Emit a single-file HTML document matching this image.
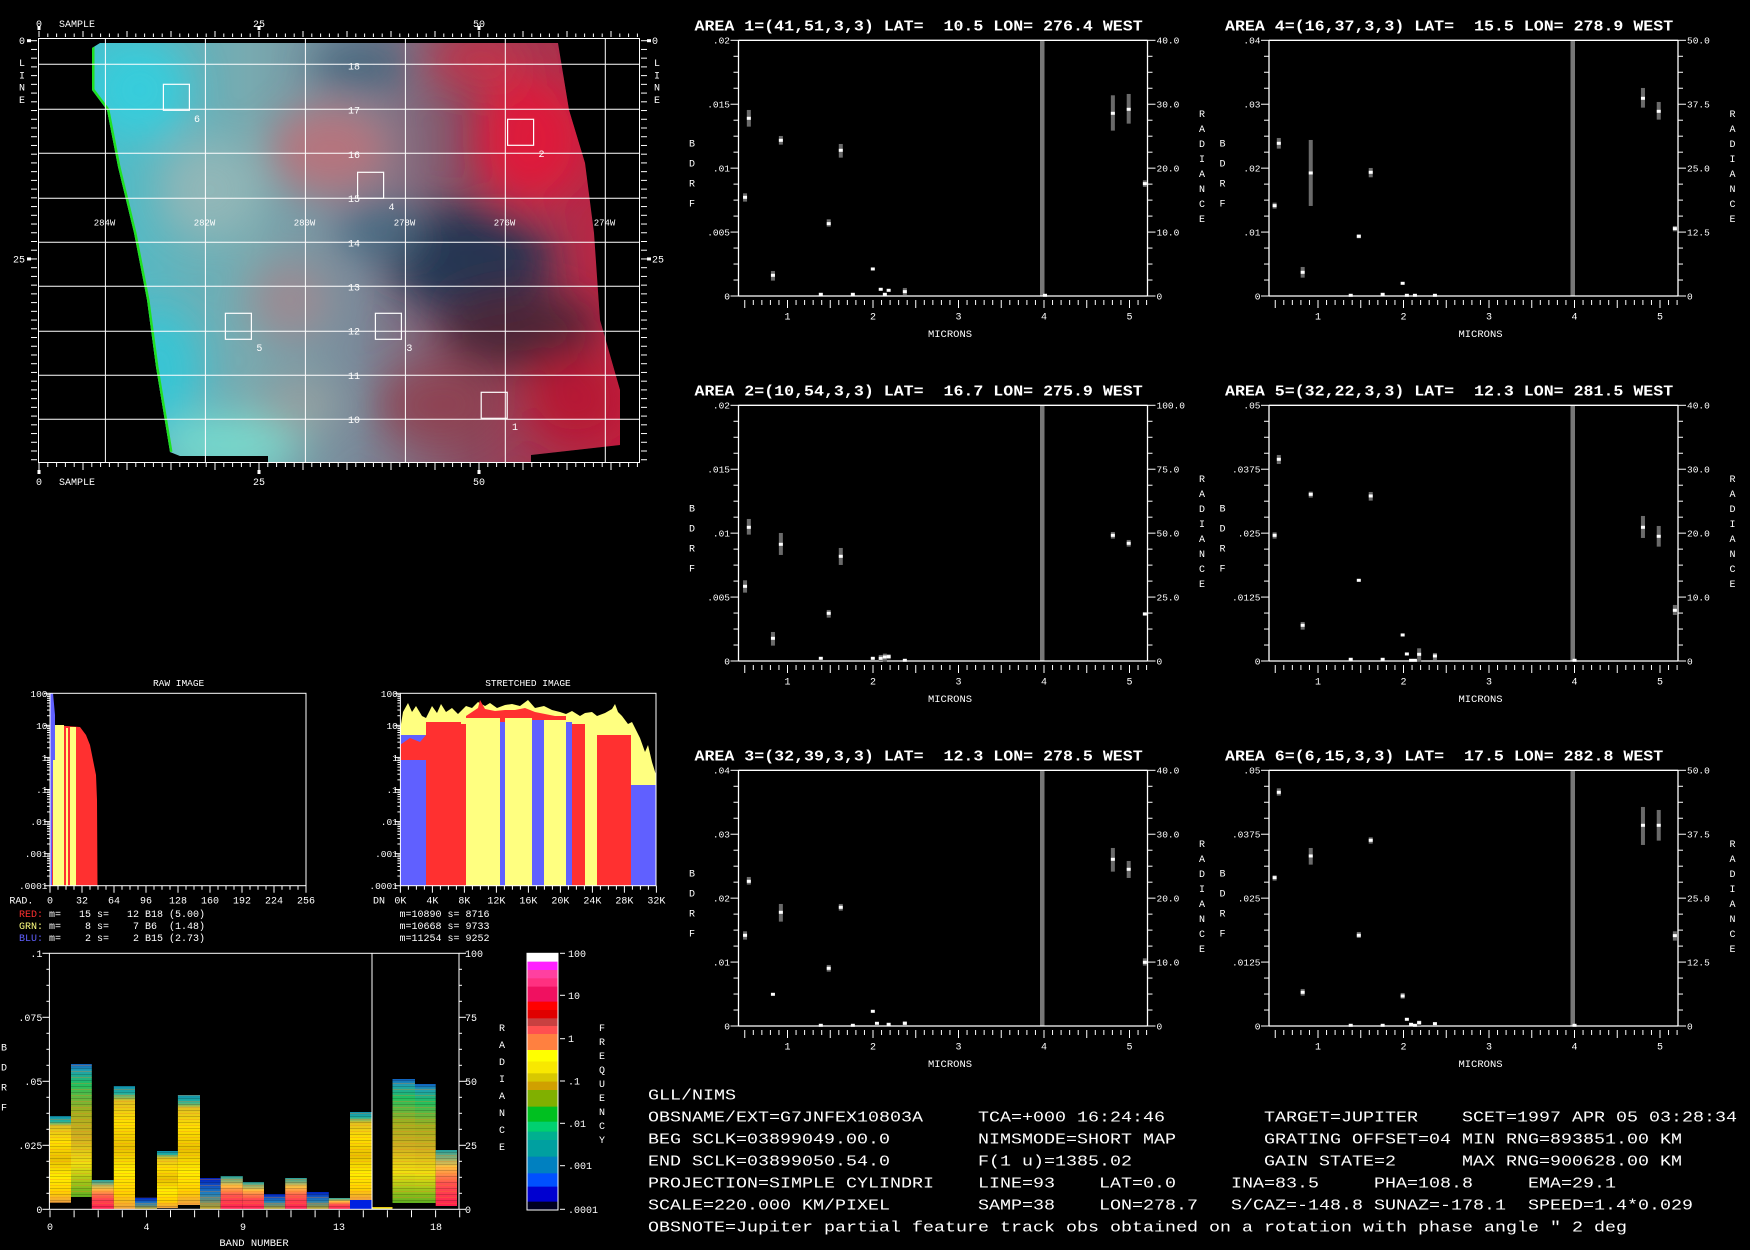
<!DOCTYPE html>
<html><head><meta charset="utf-8">
<style>
html,body{margin:0;padding:0;background:#000;width:1750px;height:1250px;overflow:hidden}
svg{position:absolute;left:0;top:0;font-family:"Liberation Mono",monospace}
text{white-space:pre}
</style></head>
<body>
<svg id="s" width="1750" height="1250" xmlns="http://www.w3.org/2000/svg">
<defs>
<clipPath id="mapclip"><polygon points="92,48 100,43 558,43 569,110 585,163 594,233 600,320 620,390 620,445 531,455 531,462 268,462 268,456 180,456 170,452 156,367 147,300 134,233 118,167 107,110 92,90"/></clipPath>
<filter id="blur" x="-20%" y="-20%" width="140%" height="140%"><feGaussianBlur stdDeviation="20"/></filter>
<linearGradient id="mapg" x1="90" y1="0" x2="620" y2="0" gradientUnits="userSpaceOnUse">
<stop offset="0" stop-color="#48c0cc"/><stop offset="0.3" stop-color="#78aab0"/><stop offset="0.5" stop-color="#7a8a9a"/><stop offset="0.72" stop-color="#8a4a60"/><stop offset="1" stop-color="#c02040"/></linearGradient>
<linearGradient id="gA" x1="0" y1="0" x2="0" y2="1"><stop offset="0" stop-color="#1090b0"/><stop offset="0.06" stop-color="#20b0a0"/><stop offset="0.12" stop-color="#e0c020"/><stop offset="0.3" stop-color="#ffe000"/><stop offset="0.5" stop-color="#e8c000"/><stop offset="0.7" stop-color="#ffee00"/><stop offset="0.88" stop-color="#ffd000"/><stop offset="1" stop-color="#f0a040"/></linearGradient>
<linearGradient id="gB" x1="0" y1="0" x2="0" y2="1"><stop offset="0" stop-color="#1060c0"/><stop offset="0.05" stop-color="#20a0b0"/><stop offset="0.15" stop-color="#20c060"/><stop offset="0.35" stop-color="#a0b020"/><stop offset="0.55" stop-color="#d0b020"/><stop offset="0.75" stop-color="#f0e010"/><stop offset="1" stop-color="#60b020"/></linearGradient>
<linearGradient id="gC" x1="0" y1="0" x2="0" y2="1"><stop offset="0" stop-color="#20a0a0"/><stop offset="0.3" stop-color="#ffc040"/><stop offset="0.6" stop-color="#ff5050"/><stop offset="1" stop-color="#ff2050"/></linearGradient>
<linearGradient id="gD" x1="0" y1="0" x2="0" y2="1"><stop offset="0" stop-color="#0020c0"/><stop offset="0.5" stop-color="#2080c0"/><stop offset="1" stop-color="#c0a020"/></linearGradient>
<pattern id="strp" width="6" height="6" patternUnits="userSpaceOnUse"><rect y="0" width="6" height="1" fill="#000" opacity="0.18"/><rect y="3" width="6" height="1" fill="#f08020" opacity="0.3"/></pattern>
</defs>

<g clip-path="url(#mapclip)">
<rect x="80" y="40" width="560" height="430" fill="url(#mapg)"/>
<g filter="url(#blur)" opacity="0.85">
<ellipse cx="140" cy="90" rx="50" ry="50" fill="#30d0e0"/>
<ellipse cx="160" cy="370" rx="40" ry="60" fill="#30c8d8"/>
<ellipse cx="230" cy="445" rx="70" ry="30" fill="#78e0d0"/>
<ellipse cx="210" cy="190" rx="50" ry="50" fill="#98b8b8"/>
<ellipse cx="330" cy="150" rx="60" ry="45" fill="#c07078"/>
<ellipse cx="290" cy="300" rx="40" ry="40" fill="#a08890"/>
<ellipse cx="360" cy="65" rx="50" ry="25" fill="#406078"/>
<ellipse cx="480" cy="60" rx="50" ry="30" fill="#c83048"/>
<ellipse cx="530" cy="140" rx="55" ry="65" fill="#e81838"/>
<ellipse cx="470" cy="260" rx="80" ry="55" fill="#183050"/>
<ellipse cx="380" cy="230" rx="40" ry="30" fill="#406880"/>
<ellipse cx="520" cy="330" rx="80" ry="40" fill="#402030"/>
<ellipse cx="575" cy="400" rx="50" ry="45" fill="#b81830"/>
<ellipse cx="440" cy="405" rx="60" ry="40" fill="#904050"/>
<ellipse cx="300" cy="405" rx="40" ry="30" fill="#98a0a0"/>
</g>
<polyline points="92,44 92,90 107,110 118,167 134,233 147,300 156,367 170,452" fill="none" stroke="#20e020" stroke-width="5"/>
</g>
<g id="mapgrid" stroke="#fff" stroke-width="1" fill="none"></g>
<g id="mapfg"></g>
</svg>
<script>
const NS='http://www.w3.org/2000/svg';
const S=document.getElementById('s');
function el(t,a,p){const e=document.createElementNS(NS,t);for(const k in a)e.setAttribute(k,a[k]);(p||S).appendChild(e);return e;}
function tx(x,y,s,size,anchor,extra,p){const e=el('text',Object.assign({x:x,y:y,'font-size':size,'text-anchor':anchor||'start',fill:'#fff',style:'white-space:pre'},extra||{}),p);e.textContent=s;return e;}
function ln(x1,y1,x2,y2,c,w){return el('line',{x1:x1,y1:y1,x2:x2,y2:y2,stroke:c||'#fff','stroke-width':w||1});}
function rc(x,y,w,h,f){return el('rect',{x:x,y:y,width:w,height:h,fill:f});}

const G=document.getElementById('mapgrid');
el('rect',{x:38.5,y:38.5,width:601,height:424},G);
[105.4,205.4,305.4,405.4,505.3,605.3].forEach(x=>el('line',{x1:x,y1:38.5,x2:x,y2:462.5},G));
[64.3,109.3,153.3,198.3,242.3,286.3,331.3,375.3,419.3].forEach(y=>el('line',{x1:38.5,y1:y,x2:639.5,y2:y},G));
for(let s=0;s<=68;s++){const x=39+s*8.8;if(x>640)break;const mj=s%5==0;
 ln(x,mj?31:33.5,x,37);ln(x,463,x,mj?470:467);}
[0,25,50].forEach(s=>{const x=39+s*8.8;rc(x-1.5,26,3,4,'#fff');rc(x-1.5,470,3,4,'#fff');
 tx(x,27,String(s),10,'middle');tx(x,485,String(s),10,'middle');});
tx(59,27,'SAMPLE',10);tx(59,485,'SAMPLE',10);
for(let l=0;l<=48;l++){const y=40.7+l*8.73;if(y>462)break;ln(31,y,37,y);ln(641,y,647,y);}
[0,25].forEach(l=>{const y=40.7+l*8.73;rc(27,y-1.5,4,3,'#fff');rc(647,y-1.5,4,3,'#fff');
 tx(25,y+3.5,String(l),10,'end');tx(652,y+3.5,String(l),10);});
['L','I','N','E'].forEach((c,i)=>{tx(22,66+i*12.3,c,10,'middle');tx(657,66+i*12.3,c,10,'middle');});
const F=document.getElementById('mapfg');
['18','17','16','15','14','13','12','11','10'].forEach((t,i)=>tx(354,69.5+i*44.2,t,10,'middle',{},F));
['284W','282W','280W','278W','276W','274W'].forEach((t,i)=>tx(104.5+i*100,225.5,t,9,'middle',{},F));
[[163.4,84.3,'6',197,122],[507.6,119.3,'2',541.5,157],[357.6,172.3,'4',391.5,210],[225.4,313.3,'5',259.4,351],[375.4,313.3,'3',409.4,351],[481.2,392.3,'1',515,430]].forEach(b=>{
 el('rect',{x:b[0],y:b[1],width:26,height:26,fill:'none',stroke:'#fff','stroke-width':1.2});tx(b[3],b[4],b[2],10,'middle');});

const cols=[{L:738.5,zx0:170,k:0.3444},{L:1269,zx0:197,k:0.3508}];
const rowsT=[40.3,405.3,770.3];
const W=409,H=255.7;
const plots=[
{c:0,r:0,t:'AREA 1=(41,51,3,3) LAT=  10.5 LON= 276.4 WEST',lf:['.02','.015','.01','.005','0'],rt:['40.0','30.0','20.0','10.0','0'],
 p:[[189,592,580,605],[200,355,330,380],[270,826,813,842],[293,421,408,434],[409,883],[432,671,658,680],[467,451,432,473],[502,883],[560,807],[583,868],[595,883],[606,871],[653,875,864,885],[1060,886],[1257,340,286,392],[1303,328,282,371],[1350,551,541,561]]},
{c:1,r:0,t:'AREA 4=(16,37,3,3) LAT=  15.5 LON= 278.9 WEST',lf:['.04','.03','.02','.01','0'],rt:['50.0','37.5','25.0','12.5','0'],
 p:[[213,617,608,626],[225,430,414,446],[293,817,801,833],[316,519,420,618],[430,886],[453,709,703,715],[487,517,504,532],[521,883],[578,850],[590,886],[613,886],[670,886],[1263,295,264,323],[1308,334,306,359],[1354,686,678,694]]},
{c:0,r:1,t:'AREA 2=(10,54,3,3) LAT=  16.7 LON= 275.9 WEST',lf:['.02','.015','.01','.005','0'],rt:['100.0','75.0','50.0','25.0','0'],
 p:[[189,664,646,683],[200,487,462,509],[270,820,801,842],[293,538,504,570],[409,880],[432,745,735,758],[467,574,549,600],[560,880],[583,880,870,888],[595,876,866,890],[606,875,868,883],[653,886],[1257,511,501,521],[1303,535,525,545],[1350,747,742,752]]},
{c:1,r:1,t:'AREA 5=(32,22,3,3) LAT=  12.3 LON= 281.5 WEST',lf:['.05','.0375','.025','.0125','0'],rt:['40.0','30.0','20.0','10.0','0'],
 p:[[213,511,502,521],[225,283,270,297],[293,781,771,794],[316,388,380,398],[430,883],[453,646],[487,393,381,407],[521,883],[578,810],[590,867],[602,886],[613,886],[625,868,850,890],[670,873,864,887],[1068,886],[1263,487,453,519],[1308,514,483,545],[1354,736,720,750]]},
{c:0,r:2,t:'AREA 3=(32,39,3,3) LAT=  12.3 LON= 278.5 WEST',lf:['.04','.03','.02','.01','0'],rt:['40.0','30.0','20.0','10.0','0'],
 p:[[189,616,604,629],[200,454,441,464],[270,793],[293,547,522,575],[409,886],[432,715,705,725],[467,532,522,542],[502,886],[560,844],[572,880],[606,883],[653,880,874,886],[1257,388,354,425],[1303,418,393,444],[1350,697,685,707]]},
{c:1,r:2,t:'AREA 6=(6,15,3,3) LAT=  17.5 LON= 282.8 WEST',lf:['.05','.0375','.025','.0125','0'],rt:['50.0','37.5','25.0','12.5','0'],
 p:[[213,443,436,452],[225,187,175,197],[293,787,777,797],[316,378,354,404],[430,886],[453,616,606,624],[487,331,322,341],[521,886],[578,798,789,806],[590,868],[602,883],[613,886],[625,878,872,888],[670,881],[1068,886],[1263,286,231,345],[1308,286,240,332],[1354,617,604,632]]}
];
plots.forEach(P=>{
 const C=cols[P.c],L=C.L,T=rowsT[P.r],R=L+W,B=T+H;
 const t=tx(L-44,T-10,P.t,15,'start',{'font-weight':'bold'});
 t.setAttribute('textLength',P.t.length*9.96);t.setAttribute('lengthAdjust','spacingAndGlyphs');
 rc(L+301.5,T,4.5,H,'#777');
 ln(L,T,R,T,'#fff',1.3);ln(L,T,L,B,'#fff',1.3);ln(R,T,R,B,'#fff',1.3);ln(L,B,R,B,'#fff',1.3);
 for(let i=0;i<=16;i++){const y=T+i*H/16,mj=i%4==0;ln(L-(mj?8:5),y,L,y);ln(R,y,R+(mj?8:5),y);}
 for(let i=0;i<5;i++){const y=T+i*H/4+3.3;tx(L-8.5,y,P.lf[i],9.5,'end');tx(R+9,y,P.rt[i],9.5,'start');}
 for(let m=5;m<=52;m++){const x=L-36.5+85.5*m/10;if(x<L-1||x>R+1)continue;const mj=m%5==0;ln(x,B+4,x,B+(mj?12:9));}
 [1,2,3,4,5].forEach(m=>tx(L-36.5+85.5*m,T+279,String(m),10,'middle'));
 tx(L+211.5,T+296.5,'MICRONS',10.5,'middle');
 ['B','D','R','F'].forEach((c,i)=>tx(L-46.5,T+106+i*20,c,10,'middle'));
 ['R','A','D','I','A','N','C','E'].forEach((c,i)=>tx(R+54.5,T+76.5+i*15,c,10,'middle'));
 P.p.forEach(q=>{const x=L+(q[0]-C.zx0)*C.k,y=T+(q[1]-121)/3;
  if(q.length>2){rc(x-2,T+(q[2]-121)/3,4,(q[3]-q[2])/3,'#6a6a6a');}
  rc(x-2,y-1.5,4,3,'#fff');});
});

function histFrame(x0,x1,title,tcx,xl,xlab){
 const T=693.3,B=885.7;
 tx(tcx,686,title,9.5,'middle');
 el('rect',{x:x0,y:T,width:x1-x0,height:B-T,fill:'none',stroke:'#fff','stroke-width':1});
 const labs=['100','10','1','.1','.01','.001','.0001'];
 for(let d=0;d<=6;d++){const y=T+d*32.07;ln(x0-6,y,x0,y);tx(x0-2.5,y+3.5,labs[d],9.5,'end');
  if(d<6)[2,3,4,5,6,7,8,9].forEach(v=>{const yy=T+(d+1)*32.07-Math.log10(v)*32.07;ln(x0-3,yy,x0,yy);});}
 for(let i=0;i<=32;i++){const x=x0+i*8;ln(x,B,x,B+(i%4==0?7:4));}
 xl.forEach((s,i)=>tx(x0+i*32,903.5,s,10,'middle'));
 tx(xlab[1],903.5,xlab[0],10,'start');
}
el('polygon',{points:'50,886 50,747 53,747 53,725 80,727 86,735 90,745 92,755 94,765 96,775 97,800 97.5,886',fill:'#ff3030'});
rc(53,725,11,161,'#ffff80');rc(66,728,2,158,'#ffff80');rc(70,727,6,159,'#ffff80');
el('polygon',{points:'50,693 53,693 55,715 55,760 53,760 52,886 50,886',fill:'#6060ff'});
histFrame(50,306,'RAW IMAGE',178.6,['0','32','64','96','128','160','192','224','256'],['RAD.',9.4]);
// stretched: jagged top background first
el('polygon',{points:'400,730 403,712 408,703 412,712 416,706 422,716 426,718 432,706 437,713 441,704 446,712 452,708 458,714 466,706 472,708 478,702 485,706 490,703 497,708 505,705 512,704 520,706 528,700 535,708 544,706 552,710 560,712 566,714 572,711 580,716 585,713 592,712 597,716 605,713 612,709 615,704 618,712 622,716 628,724 632,722 636,730 640,738 645,752 648,745 652,762 656,775 656,800 400,800',fill:'#ffff80'});
el('polygon',{points:'466,716 472,712 478,708 480,700 485,709 495,711 505,710 515,710 525,708 535,712 545,714 555,716 566,716 566,722 466,722',fill:'#ff3030'});
const st=[[400,426,'#6060ff',735],[426,461,'#ff3030',722],[461,466,'#ff3030',724],[466,500,'#ffff80',718],[500,505,'#6060ff',722],[505,532,'#ffff80',718],[532,544,'#6060ff',720],[544,566,'#ffff80',720],[566,572,'#6060ff',722],[572,585,'#ff3030',724],[585,597,'#ffff80',724],[597,631,'#ff3030',735],[631,656,'#6060ff',785]];
st.forEach(s=>rc(s[0],s[3],s[1]-s[0],886-s[3],s[2]));
el('polygon',{points:'400,745 410,738 420,742 426,735 426,760 400,760',fill:'#ff3030'});
histFrame(400.4,656,'STRETCHED IMAGE',528,['0K','4K','8K','12K','16K','20K','24K','28K','32K'],['DN',373]);
function leg(y,lab,col,rest){const t=tx(19,y,'',10);
 const a=document.createElementNS(NS,'tspan');a.setAttribute('fill',col);a.textContent=lab;t.appendChild(a);
 const b=document.createElementNS(NS,'tspan');b.textContent=rest;t.appendChild(b);}
leg(917,'RED:','#ff3030',' m=   15 s=   12 B18 (5.00)');
leg(929,'GRN:','#ffff80',' m=    8 s=    7 B6  (1.48)');
leg(941,'BLU:','#6060ff',' m=    2 s=    2 B15 (2.73)');
tx(399.5,917,'m=10890 s= 8716',10);tx(399.5,929,'m=10668 s= 9733',10);tx(399.5,941,'m=11254 s= 9252',10);

const bT=953.3,bB=1209.3,bL=49.4,bR=459;
const edges=[49.4,71,91.8,113.8,135,157,177.9,200,220.7,242.8,264,285.2,306.8,328.8,350,372,392.5,415,435.7,457];
const bars=[[1116,1202.7,'gA'],[1064,1197,'gB'],[1180,1209,'gC'],[1086,1209,'gA'],[1197.7,1209,'gD'],[1151,1208,'gA'],[1095,1205,'gA'],[1178,1209,'gD'],[1176,1209,'gC'],[1182,1209,'gC'],[1194,1209,'gD'],[1178,1209,'gC'],[1192,1209,'gD'],[1198,1209,'gC'],[1112,1200,'gA'],[1207,1209,'gA'],[1079,1203,'gB'],[1084,1203,'gB'],[1150,1206,'gC']];
bars.forEach((b,i)=>{const x=edges[i],w=edges[i+1]-x;rc(x,b[0],w,b[1]-b[0],'url(#'+b[2]+')');rc(x,b[0],w,b[1]-b[0],'url(#strp)');});
rc(350,1200,22,9,'#0020e0');
rc(372,1208,20,1.5,'#e0e040');
el('rect',{x:bL,y:bT,width:bR-bL,height:bB-bT,fill:'none',stroke:'#fff','stroke-width':1});
ln(372,bT,372,bB);
const bl=['.1','.075','.05','.025','0'],br=['100','75','50','25','0'];
for(let i=0;i<=16;i++){const y=bT+i*16,mj=i%4==0;ln(bL-(mj?7:3),y,bL,y);ln(bR,y,bR+(mj?7:3),y);
 if(mj){tx(bL-7,y+3.5,bl[i/4],10,'end');tx(bR+6,y+3.5,br[i/4],10,'start');}}
for(let i=0;i<=17;i++){const x=50+24.1*i;ln(x,bB+1,x,bB+8);}
[[0,50],[4,146.5],[9,243],[13,339],[18,436]].forEach(a=>tx(a[1],1230,String(a[0]),10,'middle'));
tx(254,1246,'BAND NUMBER',10.5,'middle');
['B','D','R','F'].forEach((c,i)=>tx(4,1050.5+i*20,c,10,'middle'));
['R','A','D','I','A','N','C','E'].forEach((c,i)=>tx(502,1031+i*17,c,10,'middle'));
['F','R','E','Q','U','E','N','C','Y'].forEach((c,i)=>tx(602,1031+i*14,c,10,'middle'));
const cb=[[40,65,'#ffffff'],[65,90,'#ff20ff'],[90,115,'#ff40a0'],[115,140,'#ff3080'],[140,185,'#f01060'],[185,210,'#ff0000'],[210,235,'#e00000'],[235,258,'#c84040'],[258,282,'#ff5050'],[282,330,'#ff8040'],[330,365,'#ffff00'],[365,400,'#f8e800'],[400,425,'#d8c800'],[425,450,'#d0a000'],[450,500,'#80b000'],[500,545,'#00c020'],[545,575,'#00d070'],[575,600,'#00b090'],[600,650,'#00a0a0'],[650,700,'#0080c0'],[700,740,'#0050ff'],[740,785,'#0000d0'],[785,810,'#000020']];
cb.forEach(c=>rc(527,940+c[0]/3,31,(c[1]-c[0])/3+0.3,c[2]));
el('rect',{x:527,y:953.3,width:31,height:256.7,fill:'none',stroke:'#fff','stroke-width':1});
[['100',953.3],['10',995.3],['1',1038.7],['.1',1081],['.01',1123.3],['.001',1165.7],['.0001',1209.3]].forEach(a=>{ln(560,a[1],565,a[1]);tx(568,a[1]+3.5,a[0],10);});

const lines=['GLL/NIMS',
'OBSNAME/EXT=G7JNFEX10803A     TCA=+000 16:24:46         TARGET=JUPITER    SCET=1997 APR 05 03:28:34',
'BEG SCLK=03899049.00.0        NIMSMODE=SHORT MAP        GRATING OFFSET=04 MIN RNG=893851.00 KM',
'END SCLK=03899050.54.0        F(1 u)=1385.02            GAIN STATE=2      MAX RNG=900628.00 KM',
'PROJECTION=SIMPLE CYLINDRI    LINE=93    LAT=0.0     INA=83.5     PHA=108.8     EMA=29.1',
'SCALE=220.000 KM/PIXEL        SAMP=38    LON=278.7   S/CAZ=-148.8 SUNAZ=-178.1  SPEED=1.4*0.029',
'OBSNOTE=Jupiter partial feature track obs obtained on a rotation with phase angle " 2 deg'];
lines.forEach((s,i)=>{const t=tx(648,1099.5+i*22,s,15);t.setAttribute('textLength',s.length*11);t.setAttribute('lengthAdjust','spacingAndGlyphs');});
</script>
</body></html>
